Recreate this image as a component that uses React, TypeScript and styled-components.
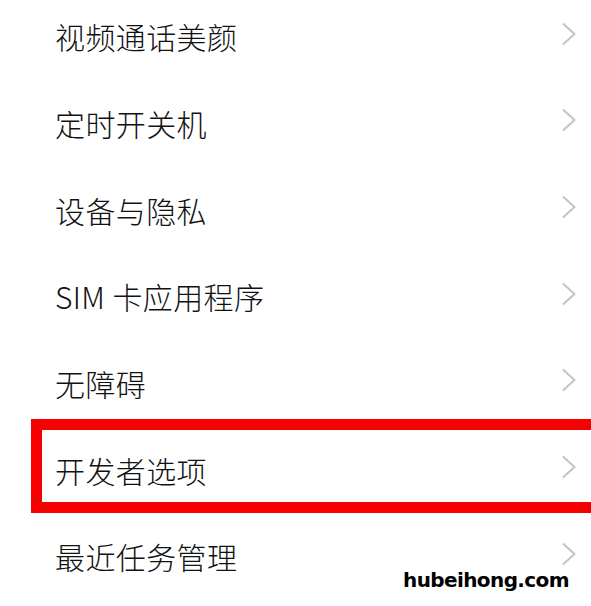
import React from "react";
import styled, { createGlobalStyle } from "styled-components";

const Global = createGlobalStyle`
  html, body { margin: 0; padding: 0; background: #ffffff; }
  body { width: 591px; height: 606px; overflow: hidden; }
`;

const Page = styled.div`
  position: relative;
  width: 591px;
  height: 606px;
  overflow: hidden;
  background: #ffffff;
  font-family: "Noto Sans CJK SC", "Noto Sans", sans-serif;
`;

const List = styled.div`
  display: flex;
  flex-direction: column;
  margin-top: -7px;
`;

const Row = styled.div`
  height: 86.67px;
  display: flex;
  align-items: center;
  justify-content: space-between;
  padding: 0 14px 0 55px;
  box-sizing: border-box;
`;

const Label = styled.span`
  font-size: 30px;
  font-weight: 300;
  color: #111111;
  line-height: 1;
  letter-spacing: 0.4px;
`;

const Chevron = styled.svg`
  width: 16px;
  height: 24px;
  flex: none;
  margin-top: -5px;
`;

const Highlight = styled.div`
  position: absolute;
  left: 31px;
  top: 419px;
  width: 580px;
  height: 94px;
  border: 11px solid #f50000;
  box-sizing: border-box;
  pointer-events: none;
`;

const Watermark = styled.div`
  position: absolute;
  left: 403px;
  top: 570px;
  font-family: "DejaVu Sans", "Liberation Sans", sans-serif;
  font-weight: 700;
  font-size: 20px;
  letter-spacing: -0.6px;
  color: #000000;
  line-height: 1;
`;

const items = [
  "视频通话美颜",
  "定时开关机",
  "设备与隐私",
  "SIM 卡应用程序",
  "无障碍",
  "开发者选项",
  "最近任务管理",
];

const Arrow = () => (
  <Chevron viewBox="0 0 16 24">
    <path d="M2.5 2 L13.5 12 L2.5 22" fill="none" stroke="#c4c4c4" strokeWidth="2" strokeLinecap="round" strokeLinejoin="round" />
  </Chevron>
);

export default function App() {
  return (
    <>
      <Global />
      <Page>
        <List>
          {items.map((t) => (
            <Row key={t}>
              <Label>{t}</Label>
              <Arrow />
            </Row>
          ))}
        </List>
        <Highlight />
        <Watermark>hubeihong.com</Watermark>
      </Page>
    </>
  );
}
